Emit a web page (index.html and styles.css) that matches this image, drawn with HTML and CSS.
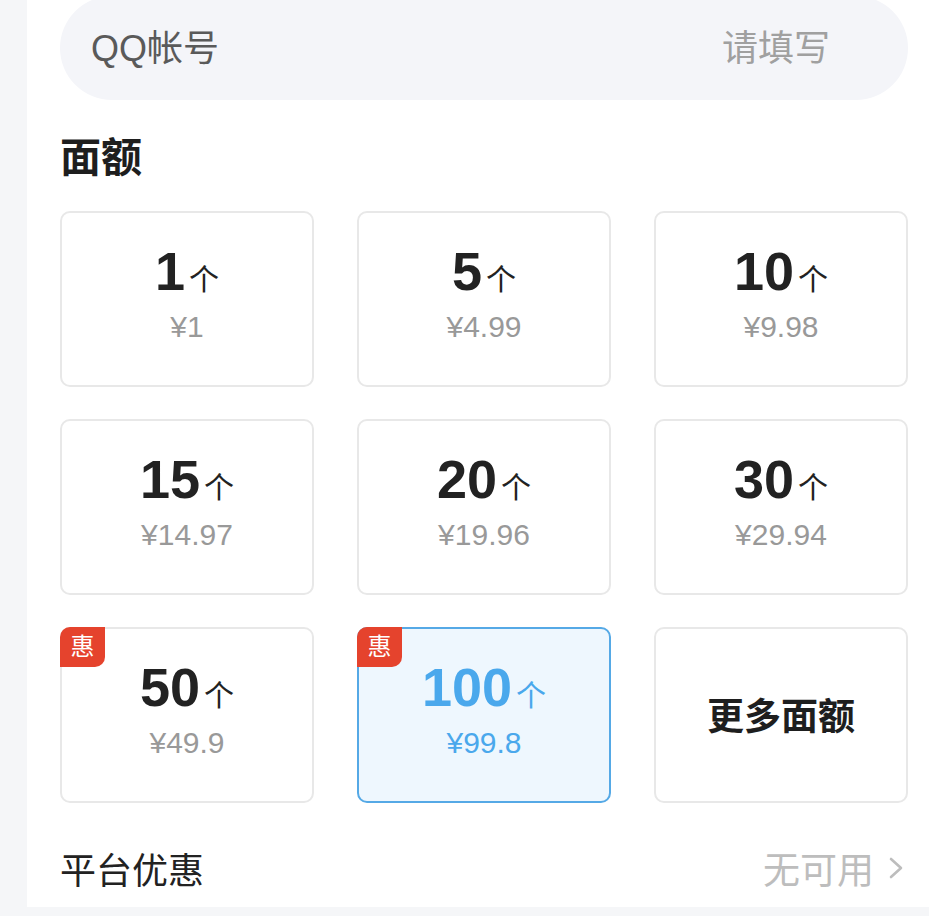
FILE: index.html
```html
<!doctype html>
<html>
<head>
	<meta charset="utf-8">
	<title>QQ币充值</title>
	<link rel="stylesheet" href="styles.css">
</head>
<body>
	<div class="page">
		<div class="account">
			<span class="account-label">QQ帐号</span>
			<span class="account-hint">请填写</span>
		</div>

		<h2 class="title">面额</h2>

		<div class="grid">
			<div class="card"><div class="amount"><b>1</b><span>个</span></div><div class="price">¥1</div></div>
			<div class="card"><div class="amount"><b>5</b><span>个</span></div><div class="price">¥4.99</div></div>
			<div class="card"><div class="amount"><b>10</b><span>个</span></div><div class="price">¥9.98</div></div>
			<div class="card"><div class="amount"><b>15</b><span>个</span></div><div class="price">¥14.97</div></div>
			<div class="card"><div class="amount"><b>20</b><span>个</span></div><div class="price">¥19.96</div></div>
			<div class="card"><div class="amount"><b>30</b><span>个</span></div><div class="price">¥29.94</div></div>
			<div class="card"><i class="tag">惠</i><div class="amount"><b>50</b><span>个</span></div><div class="price">¥49.9</div></div>
			<div class="card active"><i class="tag">惠</i><div class="amount"><b>100</b><span>个</span></div><div class="price">¥99.8</div></div>
			<div class="card more">更多面额</div>
		</div>

		<div class="coupon">
			<span class="coupon-label">平台优惠</span>
			<span class="coupon-value">无可用
				<svg width="16" height="24" viewBox="0 0 16 24"><polyline points="3,3 13,12 3,21" fill="none" stroke="#bdbdbd" stroke-width="2.6" stroke-linecap="round" stroke-linejoin="round"/></svg>
			</span>
		</div>
	</div>
</body>
</html>
```

FILE: styles.css
```css
*{
	margin:0;
	padding:0;
	box-sizing:border-box;
}
body{
	background:#f5f6f8;
	font-family:"Liberation Sans","Noto Sans CJK SC",sans-serif;
	color:#222;
	overflow:hidden;
}
.page{
	display:flow-root;
	margin-left:27px;
	height:907px;
	padding:0 21px 0 33px;
	background:#fff;
}
.account{
	display:flex;
	justify-content:space-between;
	align-items:center;
	height:104px;
	margin-top:-4px;
	padding:0 78px 6px 31px;
	border-radius:52px;
	background:#f4f5f9;
	font-size:36px;
}
.account-label{
	color:#5a5a5a;
}
.account-hint{
	color:#a0a0a0;
}
.title{
	margin-top:36px;
	font-size:41px;
	line-height:44px;
	font-weight:bold;
	color:#1e1e1e;
}
.grid{
	display:grid;
	grid-template-columns:repeat(3,1fr);
	grid-auto-rows:176px;
	column-gap:43px;
	row-gap:32px;
	margin-top:31px;
}
.card{
	position:relative;
	display:flex;
	flex-direction:column;
	align-items:center;
	justify-content:center;
	padding-bottom:12px;
	border:2px solid #e8e8e8;
	border-radius:10px;
	background:#fff;
}
.amount{
	display:flex;
	align-items:baseline;
	line-height:54px;
	color:#222;
}
.amount b{
	font-size:54px;
	font-weight:bold;
}
.amount span{
	margin-left:4px;
	font-size:30px;
}
.price{
	margin-top:5px;
	font-size:30px;
	line-height:30px;
	color:#999;
}
.tag{
	position:absolute;
	top:-2px;
	left:-2px;
	width:45px;
	height:40px;
	line-height:40px;
	text-align:center;
	font-style:normal;
	font-size:24px;
	color:#fff;
	background:#e5432d;
	border-radius:10px 0 10px 0;
}
.card.active{
	border-color:#55a9e6;
	background:#eef7fe;
}
.card.active .amount,
.card.active .price{
	color:#4aa8ec;
}
.card.more{
	padding-bottom:2px;
	font-size:37px;
	font-weight:bold;
	color:#1e1e1e;
}
.coupon{
	display:flex;
	justify-content:space-between;
	align-items:center;
	height:50px;
	margin-top:40px;
	font-size:36px;
}
.coupon-label{
	color:#222;
}
.coupon-value{
	display:flex;
	align-items:center;
	gap:14px;
	padding-right:4px;
	font-size:37px;
	color:#bdbdbd;
}
```
